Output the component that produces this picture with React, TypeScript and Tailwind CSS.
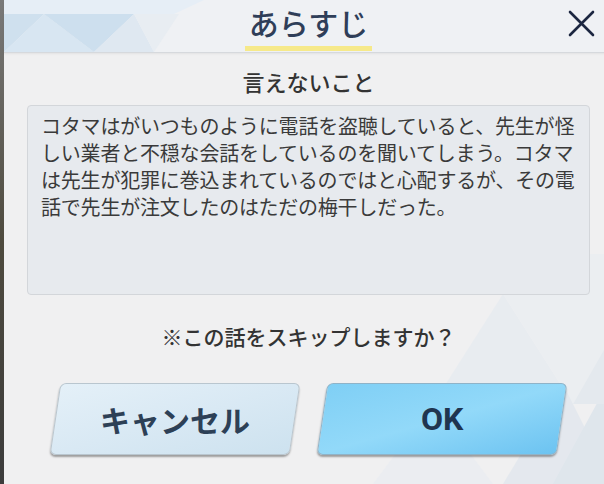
const JP = "font-['Noto_Sans_CJK_JP','Noto_Sans',sans-serif]";

const story = [
  "コタマはがいつものように電話を盗聴していると、先生が怪",
  "しい業者と不穏な会話をしているのを聞いてしまう。コタマ",
  "は先生が犯罪に巻込まれているのではと心配するが、その電",
  "話で先生が注文したのはただの梅干しだった。",
];

function CloseIcon() {
  return (
    <svg width="27" height="27" viewBox="0 0 27 27" fill="none">
      <path d="M2 2 L25 25 M25 2 L2 25" stroke="#1c2640" strokeWidth="2.6" strokeLinecap="round" />
    </svg>
  );
}

function HeaderPattern() {
  // pale triangle facets on the left of the title bar
  return (
    <svg className="absolute left-0 top-0" width="200" height="52" viewBox="0 0 200 52">
      <polygon points="0,0 200,0 170,14 0,14" fill="#e6eef6" />
      <polygon points="0,14 40,14 0,52" fill="#cfe0ee" />
      <polygon points="40,14 0,52 90,52" fill="#d8e6f2" />
      <polygon points="40,14 130,14 90,52" fill="#cddfee" />
      <polygon points="130,14 90,52 150,52" fill="#dfe8f1" />
      <polygon points="130,14 175,14 150,52" fill="#e8edf2" />
    </svg>
  );
}

function BodyPattern() {
  return (
    <svg className="absolute right-0 bottom-0 opacity-70" width="260" height="230" viewBox="0 0 260 230">
      <polygon points="80,150 150,40 220,150" fill="#e6ebf0" />
      <polygon points="150,40 220,150 260,80 260,0 200,0" fill="#eaeef2" />
      <polygon points="150,230 210,130 260,230" fill="#dfe6ed" />
      <polygon points="200,230 260,120 260,230" fill="#d8e2eb" />
      <polygon points="20,230 80,150 140,230" fill="#e9edf1" />
      <polygon points="220,150 260,80 260,150" fill="#e0e7ee" />
    </svg>
  );
}

export default function App() {
  return (
    <div className={`w-[604px] h-[484px] flex overflow-hidden bg-[#f0f0f1] ${JP}`}>
      {/* game background peeking at the left */}
      <div className="w-[4px] shrink-0 bg-gradient-to-b from-[#7a7a7a] via-[#4e4a3e] to-[#3c3c3c]" />

      {/* Dialog */}
      <div className="relative w-[609px] shrink-0 h-full flex flex-col bg-[#f0f0f1]">
        <BodyPattern />

        {/* Title bar */}
        <div className="relative h-[53px] shrink-0 border-b border-[#d6d9dd] bg-[#eff1f4] shadow-[0_1px_2px_rgba(0,0,0,0.06)]">
          <HeaderPattern />
          <div className="relative flex justify-center pt-[7px]">
            <div className="flex flex-col items-center">
              <span className="px-[4px] text-[30px] leading-[30px] font-medium text-[#2f3e58]">あらすじ</span>
              <div className="mt-[9px] h-[5px] w-full bg-[#f6e98a]" />
            </div>
          </div>
          <button className="absolute right-[18px] top-[10px]">
            <CloseIcon />
          </button>
        </div>

        {/* Body */}
        <div className="relative flex flex-col items-center">
          <h2 className="mt-[17px] text-[22px] leading-[22px] font-medium text-[#333]">言えないこと</h2>

          <div className="mt-[13px] w-[563px] h-[190px] rounded-[4px] border border-[#d3d6da] bg-[#e7eaee] px-[13px] pt-[6px]">
            {story.map((line) => (
              <p key={line} className="whitespace-nowrap text-[20px] leading-[27px] tracking-[-0.2px] text-[#3a3a3a]">
                {line}
              </p>
            ))}
          </div>

          <p className="mt-[31px] text-[21px] leading-[21px] font-medium text-[#333]">※この話をスキップしますか？</p>

          <div className="mt-[36px] flex gap-[27px]">
            <button className="w-[240px] h-[72px] -skew-x-[8.5deg] rounded-[6px] border border-[#b9c6cf] bg-gradient-to-br from-[#e4f0f8] via-[#d9e9f4] to-[#cde2ef] shadow-[0_2px_2px_rgba(0,0,0,0.35)] flex items-center justify-center">
              <span className="skew-x-[8.5deg] text-[30px] font-bold text-[#2d4056]">キャンセル</span>
            </button>
            <button className="w-[240px] h-[72px] -skew-x-[8.5deg] rounded-[6px] border border-[#8fb3c8] bg-gradient-to-br from-[#7fcff5] via-[#92d9f9] to-[#6cc3f1] shadow-[0_2px_2px_rgba(0,0,0,0.35)] flex items-center justify-center">
              <span className="skew-x-[8.5deg] text-[32px] font-bold text-[#1f3550] font-['Roboto',sans-serif]">OK</span>
            </button>
          </div>
        </div>
      </div>
    </div>
  );
}
